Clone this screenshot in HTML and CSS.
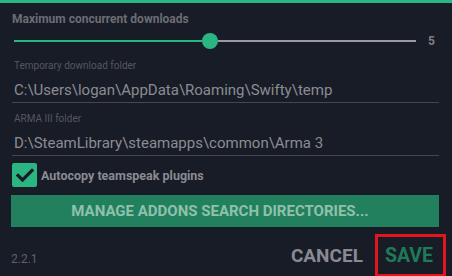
FILE: index.html
```html
<!DOCTYPE html>
<html>
<head>
<meta charset="utf-8">
<link rel="stylesheet" href="styles.css">
</head>
<body>
<div class="topbar"></div>
<div class="content">
  <div class="title">Maximum concurrent downloads</div>
  <div class="slider-row">
    <div class="slider">
      <div class="track-fill"></div>
      <div class="thumb"></div>
      <div class="track-rest"></div>
    </div>
    <div class="slider-value">5</div>
  </div>
  <div class="field field-first">
    <div class="field-label">Temporary download folder</div>
    <div class="field-input">C:\Users\logan\AppData\Roaming\Swifty\temp</div>
  </div>
  <div class="field">
    <div class="field-label">ARMA III folder</div>
    <div class="field-input">D:\SteamLibrary\steamapps\common\Arma 3</div>
  </div>
  <div class="check-row">
    <div class="checkbox">
      <svg width="18" height="14" viewBox="0 0 18 14"><path d="M2 7.5 L6.5 12 L16 2.5" fill="none" stroke="#191c27" stroke-width="3.2" stroke-linecap="square"/></svg>
    </div>
    <div class="check-label">Autocopy teamspeak plugins</div>
  </div>
  <div class="manage-btn">MANAGE ADDONS SEARCH DIRECTORIES...</div>
  <div class="footer">
    <div class="version">2.2.1</div>
    <div class="actions">
      <div class="btn-cancel">CANCEL</div>
      <div class="btn-save">SAVE</div>
    </div>
  </div>
</div>
</body>
</html>
```
FILE: styles.css
```css
html, body {
  margin: 0;
  padding: 0;
  background: #181c27;
  width: 452px;
  height: 276px;
  overflow: hidden;
  font-family: Roboto, "Liberation Sans", sans-serif;
}
.topbar {
  height: 3px;
  background: #2bb582;
}
.content {
  padding: 8px 13px 0 12px;
  display: flex;
  flex-direction: column;
}
.title {
  font-size: 12px;
  font-weight: bold;
  color: #6c6d74;
  line-height: 16px;
}
.slider-row {
  display: flex;
  align-items: center;
  height: 16px;
  margin-top: 6px;
  padding-left: 2px;
}
.slider {
  position: relative;
  display: flex;
  align-items: center;
  width: 402px;
  height: 16px;
}
.track-fill {
  width: 188px;
  height: 2px;
  background: #2bb582;
}
.thumb {
  width: 16px;
  height: 16px;
  border-radius: 50%;
  background: #2bb582;
}
.track-rest {
  flex: 1;
  height: 2px;
  background: #9a9a9f;
}
.slider-value {
  margin-left: 12px;
  font-size: 12px;
  color: #7d7e85;
  font-weight: bold;
}
.field {
  display: flex;
  flex-direction: column;
  margin-top: 10px;
}
.field-first {
  margin-top: 11px;
}
.field-label {
  font-size: 10px;
  line-height: 12px;
  color: #55575f;
  padding-left: 2px;
}
.field-input {
  font-size: 15px;
  line-height: 19px;
  margin-top: 9px;
  color: #8b8c92;
  padding-left: 2px;
  padding-bottom: 2px;
  border-bottom: 1px solid #45474f;
}
.check-row {
  display: flex;
  align-items: center;
  margin-top: 7px;
}
.checkbox {
  width: 25px;
  height: 24px;
  border-radius: 2px;
  background: #2bb582;
  display: flex;
  align-items: center;
  justify-content: center;
}
.check-label {
  margin-left: 4px;
  font-size: 12.5px;
  font-weight: bold;
  color: #8a8b91;
}
.manage-btn {
  margin-top: 8px;
  height: 32px;
  margin-left: -1px;
  padding-right: 10px;
  background: #22805e;
  color: #8fc1ab;
  font-size: 15px;
  font-weight: bold;
  display: flex;
  align-items: center;
  justify-content: center;
}
.footer {
  display: flex;
  justify-content: space-between;
  align-items: flex-end;
}
.version {
  font-size: 12px;
  color: #5f6069;
  margin-bottom: 11px;
  margin-left: -1px;
}
.actions {
  display: flex;
  align-items: center;
  margin-top: 7px;
  margin-right: -7px;
}
.btn-cancel {
  font-size: 19px;
  font-weight: bold;
  color: #898a91;
  margin-right: 12px;
}
.btn-save {
  font-size: 19.5px;
  font-weight: bold;
  color: #1f7a59;
  border: 3px solid #e3141c;
  padding: 6px 10px 6px 7px;
  line-height: 25px;
}
```
